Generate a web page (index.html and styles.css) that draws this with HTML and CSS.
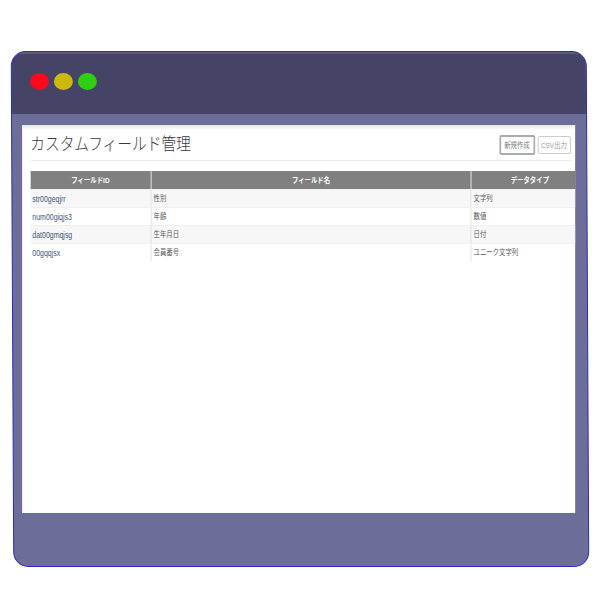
FILE: index.html
```html
<!DOCTYPE html>
<html lang="ja">
<head>
<meta charset="utf-8">
<title>カスタムフィールド管理</title>
<link rel="stylesheet" href="styles.css">
</head>
<body>
<div class="window">
  <div class="titlebar">
    <span class="dot dot-red"></span>
    <span class="dot dot-yellow"></span>
    <span class="dot dot-green"></span>
  </div>
  <div class="body">
    <div class="panel">
      <div class="inner">
        <div class="head">
          <h1 class="title">カスタムフィールド管理</h1>
          <div class="actions">
            <button class="btn btn-primary">新規作成</button>
            <button class="btn">CSV出力</button>
          </div>
        </div>
        <table class="fields">
          <thead>
            <tr><th class="c1">フィールドID</th><th class="c2">フィールド名</th><th class="c3">データタイプ</th></tr>
          </thead>
          <tbody>
            <tr><td><a class="link">str00geqjrr</a></td><td>性別</td><td>文字列</td></tr>
            <tr><td><a class="link">num00giqjs3</a></td><td>年齢</td><td>数値</td></tr>
            <tr><td><a class="link">dat00gmqjsg</a></td><td>生年月日</td><td>日付</td></tr>
            <tr><td><a class="link">00gqqjsx</a></td><td>会員番号</td><td>ユニーク文字列</td></tr>
          </tbody>
        </table>
      </div>
    </div>
  </div>
</div>
</body>
</html>
```

FILE: styles.css
```css
* { box-sizing: border-box; }
html, body { margin: 0; padding: 0; background: #fff; }
body { padding: 51px 0 0 12px; font-family: "Liberation Sans", "Noto Sans CJK JP", sans-serif; }

.window {
  width: 576px;
  height: 516px;
  border: 1px solid #2a2ac4;
  border-radius: 15px;
  background: #6c6d99;
  overflow: hidden;
  display: flex;
  flex-direction: column;
  transform: skewX(0.28deg);
}
.titlebar {
  height: 62px;
  background: #454366;
  box-shadow: inset 0 2px 1px #5d5c7c;
  display: flex;
  align-items: center;
  gap: 5px;
  padding: 0 0 3px 18px;
  flex: none;
}
.dot { width: 19px; height: 17px; border-radius: 50%; }
.dot-red { background: #fb0a1d; }
.dot-yellow { background: #cdb90e; }
.dot-green { background: #2fce12; }

.body { flex: 1; padding: 11px 0 0 8.5px; transform: skewX(-0.28deg); }
.panel {
  width: 553px;
  height: 388px;
  background: #fff;
  overflow: hidden;
  position: relative;
}
.panel::before {
  content: "";
  position: absolute;
  left: 0; right: 0; top: 0;
  height: 5px;
  background: linear-gradient(#e6e6ea, #fff);
}
.inner {
  width: 650px;
  height: 388px;
  padding: 0 0 0 9.5px;
  transform: scaleX(0.8508);
  transform-origin: left top;
  position: relative;
}
.head {
  height: 36px;
  width: 635px;
  margin-bottom: 10px;
  display: flex;
  justify-content: space-between;
  align-items: center;
  padding-top: 10px;
  border-bottom: 1px solid #ececec;
}
.title {
  margin: 0;
  font-size: 17.3px;
  font-weight: 300;
  color: #3a3a3a;
  line-height: 24px;
  padding-bottom: 7px;
}
.actions { display: flex; gap: 3px; align-items: center; padding-bottom: 6px; }
.btn {
  font: inherit;
  font-size: 7.5px;
  color: #999;
  background: #fff;
  border: 1px solid #c8c8c8;
  border-radius: 2px;
  height: 18px;
  width: 39px;
  padding: 0;
}
.btn-primary {
  width: 42px;
  height: 20px;
  color: #777;
  border: 2px solid #a6acb2;
}
.fields {
  width: 641px;
  border-collapse: collapse;
  table-layout: fixed;
  font-size: 7.5px;
  color: #555;
}
.c1 { width: 142px; }
.c2 { width: 376px; }
.c3 { width: 123px; padding-left: 16px; }
th {
  height: 18px;
  background: #808080;
  color: #fff;
  font-weight: 700;
  text-align: center;
  border-left: 1px solid #e0e0e0;
}
th:first-child, td:first-child { border-left: 0; }
td {
  height: 18px;
  padding: 0 0 1px 2.5px;
  border-left: 1px solid #dcdcdc;
  border-top: 1px solid #f0f0f0;
}
td:first-child { padding: 2px 0 0 2.5px; }
tbody tr:nth-child(odd) { background: #f7f7f7; }
.link { color: #3d5478; font-size: 8.2px; }
```
